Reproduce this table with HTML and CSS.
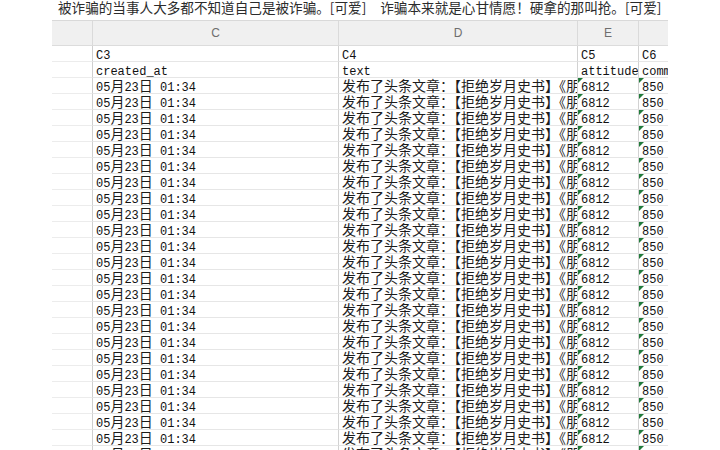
FILE: index.html
```html
<!DOCTYPE html>
<html lang="zh">
<head>
<meta charset="utf-8">
<title>sheet</title>
<link rel="stylesheet" href="styles.css">
</head>
<body>
<div class="caption">被诈骗的当事人大多都不知道自己是被诈骗。[可爱]<span class="gap"></span>诈骗本来就是心甘情愿！硬拿的那叫抢。[可爱]</div>
<div class="sheet">
  <div class="h"></div><div class="h">C</div><div class="h">D</div><div class="h">E</div><div class="h"></div>

  <div class="c rh"></div><div class="c"><span class="m">C3</span></div><div class="c"><span class="m">C4</span></div><div class="c"><span class="m">C5</span></div><div class="c"><span class="m">C6</span></div>
  <div class="c rh"></div><div class="c"><span class="m">created_at</span></div><div class="c"><span class="m">text</span></div><div class="c"><span class="m">attitudes_count</span></div><div class="c"><span class="m">comments_count</span></div>

  <div class="c rh"></div><div class="c"><span class="m">05</span>月<span class="m">23</span>日<span class="m"> 01:34</span></div><div class="c">发布了头条文章：【拒绝岁月史书】《朋友圈</div><div class="c t"><span class="m">6812</span></div><div class="c t"><span class="m">850</span></div>
  <div class="c rh"></div><div class="c"><span class="m">05</span>月<span class="m">23</span>日<span class="m"> 01:34</span></div><div class="c">发布了头条文章：【拒绝岁月史书】《朋友圈</div><div class="c t"><span class="m">6812</span></div><div class="c t"><span class="m">850</span></div>
  <div class="c rh"></div><div class="c"><span class="m">05</span>月<span class="m">23</span>日<span class="m"> 01:34</span></div><div class="c">发布了头条文章：【拒绝岁月史书】《朋友圈</div><div class="c t"><span class="m">6812</span></div><div class="c t"><span class="m">850</span></div>
  <div class="c rh"></div><div class="c"><span class="m">05</span>月<span class="m">23</span>日<span class="m"> 01:34</span></div><div class="c">发布了头条文章：【拒绝岁月史书】《朋友圈</div><div class="c t"><span class="m">6812</span></div><div class="c t"><span class="m">850</span></div>
  <div class="c rh"></div><div class="c"><span class="m">05</span>月<span class="m">23</span>日<span class="m"> 01:34</span></div><div class="c">发布了头条文章：【拒绝岁月史书】《朋友圈</div><div class="c t"><span class="m">6812</span></div><div class="c t"><span class="m">850</span></div>
  <div class="c rh"></div><div class="c"><span class="m">05</span>月<span class="m">23</span>日<span class="m"> 01:34</span></div><div class="c">发布了头条文章：【拒绝岁月史书】《朋友圈</div><div class="c t"><span class="m">6812</span></div><div class="c t"><span class="m">850</span></div>
  <div class="c rh"></div><div class="c"><span class="m">05</span>月<span class="m">23</span>日<span class="m"> 01:34</span></div><div class="c">发布了头条文章：【拒绝岁月史书】《朋友圈</div><div class="c t"><span class="m">6812</span></div><div class="c t"><span class="m">850</span></div>
  <div class="c rh"></div><div class="c"><span class="m">05</span>月<span class="m">23</span>日<span class="m"> 01:34</span></div><div class="c">发布了头条文章：【拒绝岁月史书】《朋友圈</div><div class="c t"><span class="m">6812</span></div><div class="c t"><span class="m">850</span></div>
  <div class="c rh"></div><div class="c"><span class="m">05</span>月<span class="m">23</span>日<span class="m"> 01:34</span></div><div class="c">发布了头条文章：【拒绝岁月史书】《朋友圈</div><div class="c t"><span class="m">6812</span></div><div class="c t"><span class="m">850</span></div>
  <div class="c rh"></div><div class="c"><span class="m">05</span>月<span class="m">23</span>日<span class="m"> 01:34</span></div><div class="c">发布了头条文章：【拒绝岁月史书】《朋友圈</div><div class="c t"><span class="m">6812</span></div><div class="c t"><span class="m">850</span></div>
  <div class="c rh"></div><div class="c"><span class="m">05</span>月<span class="m">23</span>日<span class="m"> 01:34</span></div><div class="c">发布了头条文章：【拒绝岁月史书】《朋友圈</div><div class="c t"><span class="m">6812</span></div><div class="c t"><span class="m">850</span></div>
  <div class="c rh"></div><div class="c"><span class="m">05</span>月<span class="m">23</span>日<span class="m"> 01:34</span></div><div class="c">发布了头条文章：【拒绝岁月史书】《朋友圈</div><div class="c t"><span class="m">6812</span></div><div class="c t"><span class="m">850</span></div>
  <div class="c rh"></div><div class="c"><span class="m">05</span>月<span class="m">23</span>日<span class="m"> 01:34</span></div><div class="c">发布了头条文章：【拒绝岁月史书】《朋友圈</div><div class="c t"><span class="m">6812</span></div><div class="c t"><span class="m">850</span></div>
  <div class="c rh"></div><div class="c"><span class="m">05</span>月<span class="m">23</span>日<span class="m"> 01:34</span></div><div class="c">发布了头条文章：【拒绝岁月史书】《朋友圈</div><div class="c t"><span class="m">6812</span></div><div class="c t"><span class="m">850</span></div>
  <div class="c rh"></div><div class="c"><span class="m">05</span>月<span class="m">23</span>日<span class="m"> 01:34</span></div><div class="c">发布了头条文章：【拒绝岁月史书】《朋友圈</div><div class="c t"><span class="m">6812</span></div><div class="c t"><span class="m">850</span></div>
  <div class="c rh"></div><div class="c"><span class="m">05</span>月<span class="m">23</span>日<span class="m"> 01:34</span></div><div class="c">发布了头条文章：【拒绝岁月史书】《朋友圈</div><div class="c t"><span class="m">6812</span></div><div class="c t"><span class="m">850</span></div>
  <div class="c rh"></div><div class="c"><span class="m">05</span>月<span class="m">23</span>日<span class="m"> 01:34</span></div><div class="c">发布了头条文章：【拒绝岁月史书】《朋友圈</div><div class="c t"><span class="m">6812</span></div><div class="c t"><span class="m">850</span></div>
  <div class="c rh"></div><div class="c"><span class="m">05</span>月<span class="m">23</span>日<span class="m"> 01:34</span></div><div class="c">发布了头条文章：【拒绝岁月史书】《朋友圈</div><div class="c t"><span class="m">6812</span></div><div class="c t"><span class="m">850</span></div>
  <div class="c rh"></div><div class="c"><span class="m">05</span>月<span class="m">23</span>日<span class="m"> 01:34</span></div><div class="c">发布了头条文章：【拒绝岁月史书】《朋友圈</div><div class="c t"><span class="m">6812</span></div><div class="c t"><span class="m">850</span></div>
  <div class="c rh"></div><div class="c"><span class="m">05</span>月<span class="m">23</span>日<span class="m"> 01:34</span></div><div class="c">发布了头条文章：【拒绝岁月史书】《朋友圈</div><div class="c t"><span class="m">6812</span></div><div class="c t"><span class="m">850</span></div>
  <div class="c rh"></div><div class="c"><span class="m">05</span>月<span class="m">23</span>日<span class="m"> 01:34</span></div><div class="c">发布了头条文章：【拒绝岁月史书】《朋友圈</div><div class="c t"><span class="m">6812</span></div><div class="c t"><span class="m">850</span></div>
  <div class="c rh"></div><div class="c"><span class="m">05</span>月<span class="m">23</span>日<span class="m"> 01:34</span></div><div class="c">发布了头条文章：【拒绝岁月史书】《朋友圈</div><div class="c t"><span class="m">6812</span></div><div class="c t"><span class="m">850</span></div>
  <div class="c rh"></div><div class="c"><span class="m">05</span>月<span class="m">23</span>日<span class="m"> 01:34</span></div><div class="c">发布了头条文章：【拒绝岁月史书】《朋友圈</div><div class="c t"><span class="m">6812</span></div><div class="c t"><span class="m">850</span></div>
  <div class="c rh"></div><div class="c"><span class="m">05</span>月<span class="m">23</span>日<span class="m"> 01:34</span></div><div class="c">发布了头条文章：【拒绝岁月史书】《朋友圈</div><div class="c t"><span class="m">6812</span></div><div class="c t"><span class="m">850</span></div>
  <div class="c rh"></div><div class="c"><span class="m">05</span>月<span class="m">23</span>日<span class="m"> 01:34</span></div><div class="c">发布了头条文章：【拒绝岁月史书】《朋友圈</div><div class="c t"><span class="m">6812</span></div><div class="c t"><span class="m">850</span></div>
</div>
</body>
</html>
```

FILE: styles.css
```css
html, body {
  margin: 0;
  padding: 0;
  background: #ffffff;
  overflow: hidden;
}

body {
  width: 720px;
  height: 450px;
  font-family: "Noto Sans CJK SC", "Noto Sans", sans-serif;
  color: #1a1a1a;
}

.caption {
  height: 20px;
  padding-left: 58px;
  font-size: 13.6px;
  line-height: 14px;
  color: #2b2b2b;
  white-space: nowrap;
  overflow: hidden;
  box-sizing: border-box;
}

.gap {
  display: inline-block;
  width: 14px;
}

.sheet {
  margin-left: 52px;
  width: 616px;
  overflow: hidden;
  display: grid;
  grid-template-columns: 41px 246px 239px 61px 60px;
  grid-template-rows: 26px;
  grid-auto-rows: 16px;
}

.h {
  box-sizing: border-box;
  background: #f0f0f0;
  border-top: 1px solid #d9d9d9;
  border-bottom: 1px solid #dcdcdc;
  border-right: 1px solid #dadada;
  font-family: "Liberation Sans", sans-serif;
  font-size: 12px;
  color: #6e6e6e;
  text-align: center;
  line-height: 24px;
}

.c {
  position: relative;
  box-sizing: border-box;
  border-bottom: 1px solid #e6e6e6;
  border-right: 1px solid #d2d2d2;
  padding-left: 3px;
  font-size: 14px;
  line-height: 15px;
  white-space: nowrap;
  overflow: hidden;
  color: #1c1c1c;
}

.rh {
  border-right: 1px solid #cfcfcf;
  border-bottom-color: #ececec;
}

.m {
  font-family: "Liberation Mono", monospace;
  font-size: 12px;
  line-height: 15px;
  white-space: pre;
  color: #111;
}

.t::before {
  content: "";
  position: absolute;
  left: 0;
  top: 0;
  width: 0;
  height: 0;
  border-top: 5px solid #217a3a;
  border-right: 5px solid transparent;
}
```
